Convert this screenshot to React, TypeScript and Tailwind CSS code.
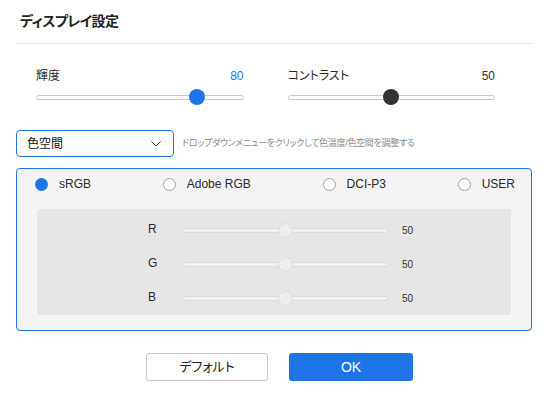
import React, { useState } from "react";

type SliderProps = { label: string; value: number; dark?: boolean };

const TopSlider = ({ label, value, dark }: SliderProps) => {
  return (
    <div className="flex flex-col">
      <div className="flex h-[14px] items-center justify-between text-[12px] leading-[14px]">
        <span className="text-[#2a2a2a]">{label}</span>
        <span className={dark ? "text-[#333]" : "text-[#1f74e8]"}>{value}</span>
      </div>
      <div className="relative mt-[6px] flex h-4 items-center">
        <div className="h-[5px] w-full rounded-full border border-[#c8c8c8] bg-white" />
        <div
          className={`absolute top-0 h-4 w-4 rounded-full ${dark ? "bg-[#333333]" : "bg-[#1f74e8]"}`}
          style={{ left: `calc(${value}% - ${value * 0.16}px)` }}
        />
      </div>
    </div>
  );
};

const ChannelRow = ({ label, value }: { label: string; value: number }) => (
  <div className="flex h-[34px] items-center pl-[111px]">
    <span className="w-[35px] -translate-y-px text-[12px] text-[#2a2a2a]">{label}</span>
    <div className="relative flex h-[15px] w-[205px] items-center">
      <div className="h-[5px] w-full rounded-full border border-[#dadada] bg-[#f1f1f1]" />
      <div
        className="absolute top-0 h-[15px] w-[15px] rounded-full border border-[#dcdcdc] bg-[#ededed]"
        style={{ left: `calc(${value}% - ${value * 0.15}px)` }}
      />
    </div>
    <span className="ml-[14px] text-[10px] text-[#333]">{value}</span>
  </div>
);

const spaces = ["sRGB", "Adobe RGB", "DCI-P3", "USER"];

export default function App() {
  const [space, setSpace] = useState("sRGB");

  return (
    <div className="relative h-[395px] w-[548px] overflow-hidden bg-white text-[#222] [font-feature-settings:'palt'] font-['Liberation_Sans','Noto_Sans_CJK_JP',sans-serif]">
      {/* header */}
      <div className="mx-4 flex h-[44px] items-center border-b border-[#e6e6e6] pl-1">
        <h1 className="text-[14px] font-bold tracking-[-0.6px] text-[#222]">ディスプレイ設定</h1>
      </div>

      {/* brightness / contrast */}
      <div className="mt-[25px] grid grid-cols-2 gap-x-[44px] pl-[36px] pr-[53px]">
        <TopSlider label="輝度" value={80} />
        <TopSlider label="コントラスト" value={50} dark />
      </div>

      {/* dropdown */}
      <div className="ml-4 mt-[25px] flex items-center">
        <button className="flex h-[27px] w-[158px] items-center justify-between rounded-[4px] border border-[#1f74e8] bg-white pl-[10px] pr-[12px]">
          <span className="text-[12px] text-[#111]">色空間</span>
          <svg width="10" height="6" viewBox="0 0 10 6" fill="none">
            <path d="M0.5 0.5L5 5L9.5 0.5" stroke="#333" strokeWidth="1" />
          </svg>
        </button>
        <span className="ml-2 text-[9px] tracking-[-0.3px] text-[#8a8a8a]">
          ドロップダウンメニューをクリックして色温度/色空間を調整する
        </span>
      </div>

      {/* color space panel */}
      <div className="mx-4 mt-[11px] h-[163px] rounded-[4px] border border-[#1f74e8] bg-[#f4f4f4]">
        <div className="mt-[5px] flex h-[20px] items-center justify-between pl-[18px] pr-[16px]">
          {spaces.map((s) => (
            <button key={s} onClick={() => setSpace(s)} className="flex items-center gap-[11px]">
              {space === s ? (
                <span className="h-[13px] w-[13px] rounded-full bg-[#1f74e8]" />
              ) : (
                <span className="h-[13px] w-[13px] rounded-full border border-[#a0a0a0] bg-white" />
              )}
              <span className="text-[12px] text-[#2a2a2a]">{s}</span>
            </button>
          ))}
        </div>

        <div className="mx-[20px] mt-[15px] h-[106px] bg-[#e6e6e6] pt-[4px]">
          <ChannelRow label="R" value={50} />
          <ChannelRow label="G" value={50} />
          <ChannelRow label="B" value={50} />
        </div>
      </div>

      {/* buttons */}
      <div className="mt-[22px] flex justify-center gap-[21px] pl-[11px]">
        <button className="h-[28px] w-[122px] rounded-[3px] border border-[#c8c8c8] bg-white text-[13px] text-[#222]">
          デフォルト
        </button>
        <button className="h-[28px] w-[124px] rounded-[3px] bg-[#1f74e8] text-[14px] text-white">
          OK
        </button>
      </div>
    </div>
  );
}
